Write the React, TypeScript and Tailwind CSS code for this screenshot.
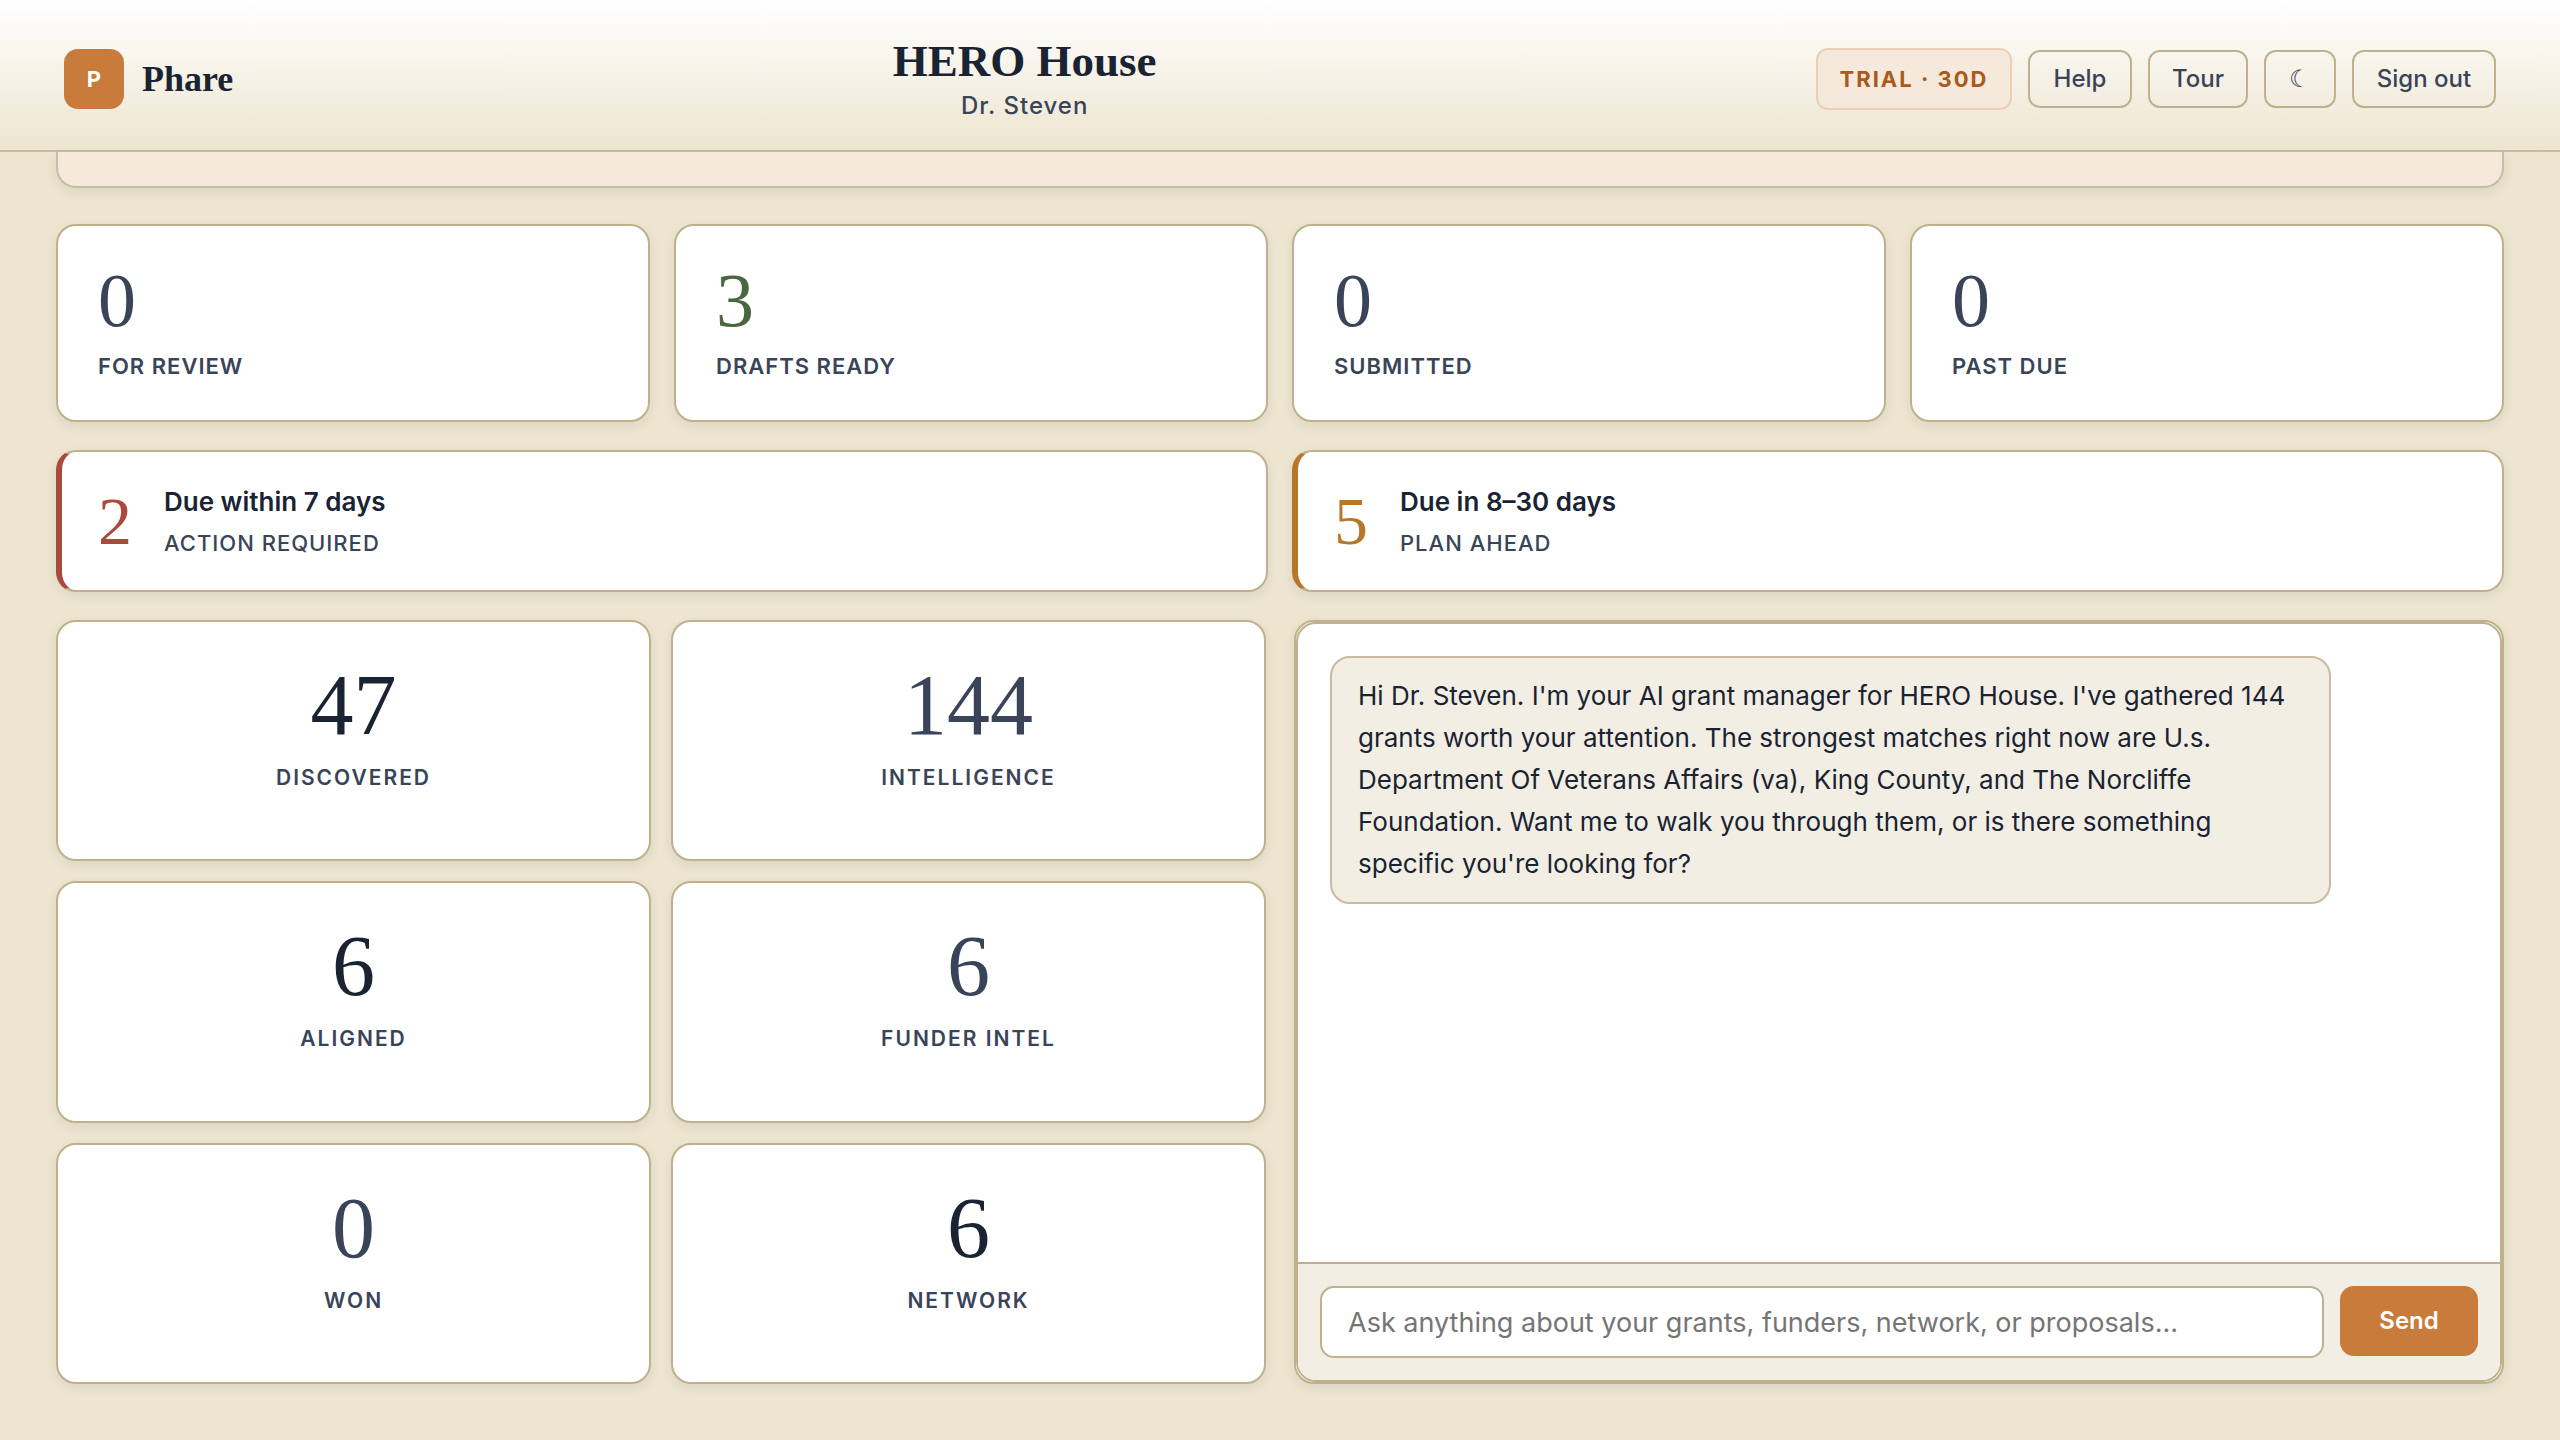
import { clsx } from 'clsx';

const NAV_ACTIONS = [
  { label: 'Help', width: 'min-w-[104px]' },
  { label: 'Tour', width: 'min-w-[100px]' },
  { label: '☾', width: 'min-w-[72px]', title: 'Toggle dark mode' },
  { label: 'Sign out', width: 'min-w-[144px]' },
];

const STATUS_CARDS = [
  { value: 0, label: 'For review', color: 'text-[#3a4459]' },
  { value: 3, label: 'Drafts ready', color: 'text-[#4a6741]' },
  { value: 0, label: 'Submitted', color: 'text-[#3a4459]' },
  { value: 0, label: 'Past due', color: 'text-[#3a4459]' },
];

const DEADLINES = [
  {
    value: 2,
    title: 'Due within 7 days',
    hint: 'Action required',
    color: 'text-[#a94a3d]',
    edge: 'border-l-[#a94a3d]',
  },
  {
    value: 5,
    title: 'Due in 8–30 days',
    hint: 'Plan ahead',
    color: 'text-[#b87728]',
    edge: 'border-l-[#b87728]',
  },
];

const TILES = [
  { value: 47, label: 'Discovered', color: 'text-[#1a2332]' },
  { value: 144, label: 'Intelligence', color: 'text-[#3a4459]' },
  { value: 6, label: 'Aligned', color: 'text-[#1a2332]' },
  { value: 6, label: 'Funder intel', color: 'text-[#3a4459]' },
  { value: 0, label: 'Won', color: 'text-[#3a4459]' },
  { value: 6, label: 'Network', color: 'text-[#1a2332]' },
];

const serif = "font-['Liberation_Serif',serif]";
const card =
  'rounded-[20px] border-2 border-[#beb18c] bg-white shadow-[0_4px_12px_rgba(26,35,50,0.08)]';
const caption = 'leading-[28px] font-semibold uppercase text-[#3a4459]';

function Header() {
  return (
    <header className="flex items-center justify-between border-b-2 border-[#c9bba0] bg-linear-to-b from-white to-[#ede5d0] px-16 pt-9 pb-7">
      <div className="flex items-center gap-[18px]">
        <div className="flex size-[60px] items-center justify-center rounded-[14px] bg-[#c87b3a] text-[22px] font-bold text-white">
          P
        </div>
        <span className={clsx(serif, 'text-[36px] font-bold text-[#1a2332]')}>Phare</span>
      </div>

      <div className="text-center">
        <h1 className={clsx(serif, 'text-[45px] leading-[50px] font-bold text-[#1a2332]')}>
          HERO House
        </h1>
        <p className="mt-1 text-[24px] leading-[32px] font-medium tracking-[1px] text-[#3a4459]">
          Dr. Steven
        </p>
      </div>

      <div className="flex items-center gap-4">
        <span className="flex h-[62px] min-w-[196px] items-center justify-center rounded-xl border-2 border-[#ecd0b5] bg-[#f5e9db] text-[22px] font-bold tracking-[2px] text-[#a85a20]">
          TRIAL · 30D
        </span>
        {NAV_ACTIONS.map((action) => (
          <button
            key={action.label}
            type="button"
            title={action.title}
            className={clsx(
              'h-[58px] rounded-xl border-2 border-[#beb18c] text-[24px] font-medium text-[#3a4459]',
              action.width
            )}
          >
            {action.label}
          </button>
        ))}
      </div>
    </header>
  );
}

function Chat() {
  return (
    <section className={clsx(card, 'flex')}>
      <div className="flex flex-1 flex-col overflow-hidden rounded-[20px] border-2 border-[#beb18c]">
        <div className="flex-1 p-8">
          <p className="max-w-[88%] rounded-[20px] border-2 border-[#c9bba0] bg-[#f3eee3] px-[26px] py-[17px] text-[26px] leading-[42px] text-[#1a2332]">
            Hi Dr. Steven. I'm your AI grant manager for HERO House. I've gathered 144 grants worth
            your attention. The strongest matches right now are U.s. Department Of Veterans Affairs
            (va), King County, and The Norcliffe Foundation. Want me to walk you through them, or is
            there something specific you're looking for?
          </p>
        </div>
        <form
          className="flex items-start gap-4 border-t-2 border-[#beb18c] bg-[#f3eee3] p-[22px]"
          onSubmit={(e) => e.preventDefault()}
        >
          <input
            type="text"
            aria-label="Message"
            placeholder="Ask anything about your grants, funders, network, or proposals..."
            className="h-[72px] min-w-0 flex-1 rounded-[14px] border-2 border-[#beb18c] bg-white px-[26px] text-[27px] text-[#1a2332] placeholder:text-[#757575]"
          />
          <button
            type="submit"
            className="h-[70px] w-[138px] rounded-[14px] bg-[#c87b3a] text-[24px] font-semibold text-white"
          >
            Send
          </button>
        </form>
      </div>
    </section>
  );
}

export default function App() {
  return (
    <div className="flex min-h-screen flex-col bg-[#ede5d0] font-['Inter',sans-serif]">
      <Header />
      <main className="flex flex-1 flex-col px-14 pb-14">
        <div className="h-9 rounded-b-[20px] border-2 border-t-0 border-[#c9bba0] bg-[#f5e9db] shadow-[0_4px_12px_rgba(26,35,50,0.08)]" />

        <div className="mt-9 grid grid-cols-4 gap-6">
          {STATUS_CARDS.map((item) => (
            <div key={item.label} className={clsx(card, 'p-10')}>
              <div className={clsx(serif, 'text-[76px] leading-[68px]', item.color)}>
                {item.value}
              </div>
              <div className={clsx(caption, 'mt-[18px] text-[22px] tracking-[1px]')}>
                {item.label}
              </div>
            </div>
          ))}
        </div>

        <div className="mt-7 grid grid-cols-2 gap-6">
          {DEADLINES.map((item) => (
            <div
              key={item.title}
              className={clsx(card, 'flex items-center gap-8 border-l-[6px] px-9 py-8', item.edge)}
            >
              <span className={clsx(serif, 'text-[68px] leading-[68px]', item.color)}>
                {item.value}
              </span>
              <div>
                <div className="text-[26px] leading-[36px] font-semibold text-[#1a2332]">
                  {item.title}
                </div>
                <div className="mt-2 text-[22px] leading-[30px] font-medium uppercase tracking-[1px] text-[#3a4459]">
                  {item.hint}
                </div>
              </div>
            </div>
          ))}
        </div>

        <div className="mt-7 grid flex-1 grid-cols-2 gap-7">
          <div className="grid grid-cols-2 grid-rows-3 gap-5">
            {TILES.map((item) => (
              <div key={item.label} className={clsx(card, 'pt-10 text-center')}>
                <div className={clsx(serif, 'text-[86px] leading-[86px]', item.color)}>
                  {item.value}
                </div>
                <div className={clsx(caption, 'mt-4 text-[21px] tracking-[2px]')}>{item.label}</div>
              </div>
            ))}
          </div>
          <Chat />
        </div>
      </main>
    </div>
  );
}
